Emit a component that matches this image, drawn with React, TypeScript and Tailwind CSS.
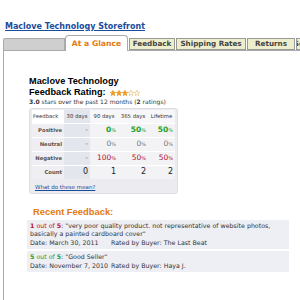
import React from 'react';

const verdana = { fontFamily: '"DejaVu Sans", Verdana, sans-serif' };
const arial = { fontFamily: '"Liberation Sans", Arial, sans-serif' };

const Star = ({ filled }: { filled: boolean }) => (
  <svg width="6" height="6" viewBox="0 0 10 10" className="block">
    <polygon
      points="5,0.5 6.3,3.6 9.6,3.8 7,6 7.9,9.4 5,7.5 2.1,9.4 3,6 0.4,3.8 3.7,3.6"
      fill={filled ? '#f0a020' : '#ffffff'}
      stroke={filled ? '#d98a10' : '#e0b060'}
      strokeWidth="0.9"
    />
  </svg>
);

type Cell = { v: string; pct?: boolean; tone?: 'green' | 'gray' | 'red' | 'black'; bold?: boolean };

const rows: { label: string; cells: Cell[] }[] = [
  {
    label: 'Positive',
    cells: [
      { v: '-' },
      { v: '0', pct: true, tone: 'green', bold: true },
      { v: '50', pct: true, tone: 'green', bold: true },
      { v: '50', pct: true, tone: 'green', bold: true },
    ],
  },
  {
    label: 'Neutral',
    cells: [
      { v: '-' },
      { v: '0', pct: true, tone: 'gray' },
      { v: '0', pct: true, tone: 'gray' },
      { v: '0', pct: true, tone: 'gray' },
    ],
  },
  {
    label: 'Negative',
    cells: [
      { v: '-' },
      { v: '100', pct: true, tone: 'red' },
      { v: '50', pct: true, tone: 'red' },
      { v: '50', pct: true, tone: 'red' },
    ],
  },
  {
    label: 'Count',
    cells: [
      { v: '0', tone: 'black' },
      { v: '1', tone: 'black' },
      { v: '2', tone: 'black' },
      { v: '2', tone: 'black' },
    ],
  },
];

const toneClass = (t?: Cell['tone']) => {
  if (t === 'green') return 'text-[#22a022]';
  if (t === 'red') return 'text-[#b0102a]';
  if (t === 'gray') return 'text-[#777]';
  if (t === 'black') return 'text-[#222]';
  return 'text-[#777]';
};

const ValueCell = ({ cell, first }: { cell: Cell; first: boolean }) => (
  <td className={`text-right pr-[2px] border-t border-white ${first ? 'bg-[#e4e6ee]' : 'bg-[#f3f3f6]'}`}>
    <span className={`${toneClass(cell.tone)} ${cell.bold ? 'font-bold' : ''} ${cell.tone === 'black' ? 'text-[8px]' : 'text-[7.5px]'}`}>
      {cell.v}
    </span>
    {cell.pct && <span className={`${toneClass(cell.tone)} text-[5px]`}>%</span>}
  </td>
);

const tabs = [
  { name: 'Feedback', w: 'w-[46px]' },
  { name: 'Shipping Rates', w: 'w-[70px]' },
  { name: 'Returns', w: 'w-[48px]' },
  { name: 'Seller Help', w: 'w-[40px]' },
];

export default function App() {
  return (
    <div className="w-[300px] h-[300px] overflow-hidden bg-white" style={verdana}>
      <div className="pt-[12px] pl-[5px] h-[34px]">
        <a className="text-[8px] font-bold text-[#1a4c9c] underline leading-[10px]">Maclove Technology Storefront</a>
      </div>

      {/* tabs */}
      <div className="flex items-end pl-[3px] h-[16px]">
        <div className="w-[62px] shrink-0 h-[12px] bg-[#cfcfcf] border border-b-0 border-[#aaa] rounded-tl-[2px]" />
        <div className="w-[63px] shrink-0 h-[16px] bg-white border border-b-0 border-[#aaa] rounded-t-[4px] relative top-[1px] flex items-center justify-center">
          <span className="text-[7.7px] font-bold text-[#e47911]">At a Glance</span>
        </div>
        {tabs.map(t => (
          <div key={t.name} className={`${t.w} shrink-0 h-[12px] ml-[1px] bg-[#eeeecc] border border-[#999] flex items-center justify-center overflow-hidden`}>
            <span className="text-[7.2px] font-bold text-[#444] whitespace-nowrap leading-[10px]">{t.name}</span>
          </div>
        ))}
      </div>

      {/* panel */}
      <div className="ml-[3px] border-l border-t border-[#aaa] h-[260px] pl-[25px] pt-[25px]">
        <div className="text-[9.2px] font-bold text-black leading-[11px]" style={arial}>Maclove Technology</div>
        <div className="flex items-center gap-[4px]">
          <span className="text-[9.2px] font-bold text-black leading-[11px]" style={arial}>Feedback Rating:</span>
          <span className="flex">
            {[0, 1, 2, 3, 4].map(i => <Star key={i} filled={i < 3} />)}
          </span>
        </div>
        <div className="text-[6px] text-[#333] leading-[8px]">
          <b>3.0</b> stars over the past 12 months (<b>2</b> ratings)
        </div>

        {/* table box */}
        <div className="mt-[2px] w-[149px] bg-[#ececf0] border border-[#dcdce2] rounded-[3px] px-[2px] pt-[1px] pb-[2px] leading-[8px]">
          <table className="border-collapse text-[5.3px] text-[#333]">
            <colgroup>
              <col className="w-[32px]" />
              <col className="w-[26px]" />
              <col className="w-[28px]" />
              <col className="w-[30px]" />
              <col className="w-[27px]" />
            </colgroup>
            <thead>
              <tr className="h-[13px]">
                <th className="font-normal text-left pl-[1px] bg-white">Feedback</th>
                <th className="font-normal text-center bg-[#e4e6ee]">30 days</th>
                <th className="font-normal text-center bg-[#f7f7f9]">90 days</th>
                <th className="font-normal text-center bg-[#f7f7f9]">365 days</th>
                <th className="font-normal text-center bg-[#f7f7f9]">Lifetime</th>
              </tr>
            </thead>
            <tbody>
              {rows.map(r => (
                <tr key={r.label} className="h-[14px]">
                  <td className="text-right pr-[2px] font-bold text-[#555] bg-[#efeff3] border-t border-white">{r.label}</td>
                  {r.cells.map((c, i) => <ValueCell key={i} cell={c} first={i === 0} />)}
                </tr>
              ))}
            </tbody>
          </table>
          <div className="pt-[1px] pl-[3px] leading-[7px]">
            <a className="text-[5.5px] text-[#1a4c9c] underline">What do these mean?</a>
          </div>
        </div>

        {/* recent feedback */}
        <div className="mt-[12px] pl-[4px] text-[9.4px] font-bold text-[#e47911] leading-[11px]" style={arial}>Recent Feedback:</div>

        <div className="mt-[3px] -ml-[2px] w-[262px] flex flex-col gap-[2px]">
          <div className="bg-[#eeeef5] px-[3px] py-[2px] text-[6.3px] leading-[8px] text-[#333]">
            <div>
              <span className="text-[#c01020]"><b>1</b> out of <b>5</b></span>: "very poor quality product. not representative of website photos, basically a painted cardboard cover"
            </div>
            <div className="flex mt-[1px]">
              <span className="w-[81px] shrink-0">Date: March 30, 2011</span>
              <span>Rated by Buyer: The Last Beat</span>
            </div>
          </div>
          <div className="bg-[#eeeef5] px-[3px] py-[2px] text-[6.3px] leading-[8px] text-[#333]">
            <div>
              <span className="text-[#2a9a2a]"><b>5</b> out of <b>5</b></span>: "Good Seller"
            </div>
            <div className="flex mt-[1px]">
              <span className="w-[81px] shrink-0">Date: November 7, 2010</span>
              <span>Rated by Buyer: Haya J.</span>
            </div>
          </div>
        </div>
      </div>
    </div>
  );
}
